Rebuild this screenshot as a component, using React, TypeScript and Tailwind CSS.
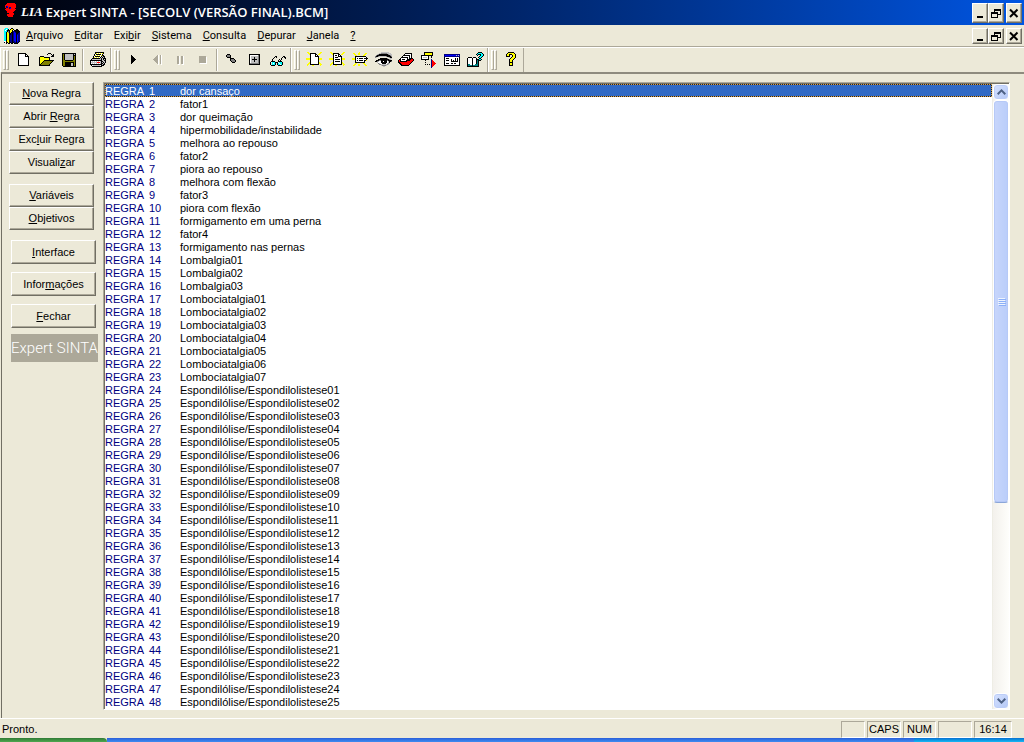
import React from "react";

const palette: Record<string, string> = {
  K: "#000000",
  W: "#ffffff",
  Y: "#ffff00",
  O: "#808000",
  G: "#808080",
  S: "#c0c0c0",
  R: "#ff0000",
  C: "#00ffff",
  B: "#0000ff",
  N: "#000080",
  T: "#008080",
  L: "#aca899",
};

const art: Record<string, string[]> = {
  novo: [
    "",
    "...KKKKKKKK",
    "...KWWWWWWKK",
    "...KWWWWWWKWK",
    "...KWWWWWWKKKK",
    "...KWWWWWWWWWK",
    "...KWWWWWWWWWK",
    "...KWWWWWWWWWK",
    "...KWWWWWWWWWK",
    "...KWWWWWWWWWK",
    "...KWWWWWWWWWK",
    "...KWWWWWWWWWK",
    "...KWWWWWWWWWK",
    "...KKKKKKKKKKK",
  ],
  abrir: [
    "",
    "..........KKK...",
    ".........K...K.K",
    "..............KK",
    "..KKKK.......KKK",
    ".KYYYYKKKKKK....",
    ".KYYYYYYYYYK....",
    ".KYYYYYYYYYK....",
    ".KYYYYKKKKKKKKKK",
    ".KYYYKOOOOOOOOK.",
    ".KYYKOOOOOOOOK..",
    ".KYKOOOOOOOOK...",
    ".KKOOOOOOOOK....",
    ".KKKKKKKKKKK....",
  ],
  salvar: [
    "",
    ".KKKKKKKKKKKKKK",
    ".KOKSSSSSSSSKSK",
    ".KOKSSSSSSSSKKK",
    ".KOKSSSSSSSSKOK",
    ".KOKSSSSSSSSKOK",
    ".KOKSSSSSSSSKOK",
    ".KOKSSSSSSSSKOK",
    ".KOOKKKKKKKKOOK",
    ".KOOOOOOOOOOOOK",
    ".KOOKKKKKKKKKOK",
    ".KOOKKKKKKSSKOK",
    ".KOOKKKKKKSSKOK",
    ".KOOKKKKKKSSKOK",
    "..KKKKKKKKKKKKK",
  ],
  imprimir: [
    ".....KKKKKKKKK",
    ".....KYWYWYWYK",
    "....KWKKKKKWK",
    "....KYWYWYWYKK",
    "...KWKKKKKWKSKK",
    "...KYWYWYWKSKSK",
    "..KKKKKKKKSKSKKK",
    ".KSSSSSSSSSKSKSK",
    "KKKKKKKKKKKKSSKK",
    "KWSWSWSWSWSKKSSK",
    "KSSSSSSRRRSKSKSK",
    "KWSWSWSWSWSKKSK",
    "KKKKKKKKKKKKSKK",
    ".KWSSSSSSSWKKK",
    "..KKKKKKKKKK",
  ],
  executar: [
    "", "", "",
    ".....K",
    ".....KK",
    ".....KKK",
    ".....KKKK",
    ".....KKKKK",
    ".....KKKK",
    ".....KKK",
    ".....KK",
    ".....K",
  ],
  voltar: [
    "", "", "",
    "........LW.LW",
    ".......LLW.LW",
    "......LLLW.LW",
    ".....LLLLW.LW",
    "....LLLLLW.LW",
    ".....LLLLW.LW",
    "......LLLW.LW",
    ".......LLW.LW",
    "........LW.LW",
    ".........W..W",
  ],
  pausar: [
    "", "", "", "",
    ".....LLW.LLW",
    ".....LLW.LLW",
    ".....LLW.LLW",
    ".....LLW.LLW",
    ".....LLW.LLW",
    ".....LLW.LLW",
    ".....LLW.LLW",
    ".....LLW.LLW",
    "......WW..WW",
  ],
  parar: [
    "", "", "", "",
    "....LLLLLLL",
    "....LLLLLLLW",
    "....LLLLLLLW",
    "....LLLLLLLW",
    "....LLLLLLLW",
    "....LLLLLLLW",
    "....LLLLLLLW",
    ".....WWWWWWW",
  ],
  passos: [
    "", "",
    "...KKK",
    "..KGGGK",
    "..KGGGK",
    "...KKKK",
    "......KKKK",
    "......KGGGK",
    "......KGGGGK",
    ".......KGGGK",
    "........KKK",
  ],
  ponto: [
    "", "",
    "..KKKKKKKKKKK",
    "..KWWWWWWWWGK",
    "..KWSSSSSSSGK",
    "..KWSSSKSSSGK",
    "..KWSSSKSSSGK",
    "..KWSKKKKKSGK",
    "..KWSSSKSSSGK",
    "..KWSSSKSSSGK",
    "..KWSSSSSSSGK",
    "..KGGGGGGGGGK",
    "..KKKKKKKKKKK",
  ],
  oculos: [
    "", "", "", "",
    ".....KK......KK",
    "....K.K.....K.KK",
    "...K.......K...K",
    "..K......K.K",
    "..K.....K.K",
    ".KKKK...KKKK",
    "KWCCCKKKWCCCK",
    "K.CWCK.KCWCCK",
    "K.CCCK.KCCWCK",
    ".KKKK...KKKK",
  ],
  regra: [
    ".YY...........YY",
    "..YYKKKKKK...YY",
    "...YKWWWWKK.YY",
    "....KWWWWKWK",
    "....KWWWWKKKK",
    "....KWWWWWWWK",
    "YYYYKWWWWWWWKYYY",
    "YYYYKWWWWWWWKYYY",
    "....KWWWWWWWK",
    "....KWWWWWWWK",
    "...YKWWWWWWWKY",
    "..YYKWWWWWWWKYY",
    ".YY.KKKKKKKKK.YY",
    ".Y....YY......Y",
  ],
  texto: [
    ".YY...........YY",
    "..YYKKKKKK...YY",
    "...YKWWWWKK.YY",
    "....KWKKWKWK",
    "....KWWWWKKKK",
    "....KWKKKWWWK",
    "YYYYKWWWWWWWKYYY",
    "YYYYKWKKKKKWKYYY",
    "....KWWWWWWWK",
    "....KWKKKKKWK",
    "...YKWWWWWWWKY",
    "..YYKWWWWWWWKYY",
    ".YY.KKKKKKKKK.YY",
    ".Y....YY......Y",
  ],
  rotulo: [
    ".......Y",
    ".YY...YY.....YY",
    "..YY..YY....YY",
    "...YY......YY",
    "...KKKKKKKKKKK",
    "...KWWWWWWWWWWK",
    "YYYKWKWKKKKWKKKK",
    "YYYKWWWWWWWWWWK",
    "...KWKWKKKKWKKY",
    "...KWWWWWWWWK",
    "...KKKKKKKKKK",
    "...YY......YY",
    "..YY..YY....YY",
    ".YY...YY.....YY",
  ],
  olho: [
    "......SSSSSSSS",
    "....SSGGGGGGSSSS",
    "..SGKKKKKKKKKGSSS",
    ".GKKKKKKKKKKKKKGS",
    "GKKGSSSSSSSGKKKKG",
    "GS...........SGKK",
    ".....KKKKKKKG..SS",
    "...KKKKKKKKKKKGS",
    ".KKKGGKKKKKKGKKKK",
    "KKGSWWKKWKKKWSKKG",
    "..SWWWKKKKKKWSK",
    "...GSWWKKKKWSGS",
    "....GGSSSSSSGS",
    "......SGGGGS",
    "........SS",
  ],
  fichas: [
    "",
    ".......KKKKKKK",
    "......KWWWWWWK",
    ".....KKKKKKKWK",
    "....KWWWWWWKWK",
    "...KKKKKKKWKWK",
    "..KWWWWWWKWKKKK",
    ".KKWKKKWWKKKKRRK",
    "KRKWWWWWKKKKRRRK",
    "KRKKKKKKKRRRRRK",
    "KKRRRRRRRRRRRK",
    ".KKRRRRRRRRRK",
    "..KKRRRRRRRK",
    "...KKKKKKKK",
  ],
  depurar: [
    "...KKKKKKKKK",
    "...KYYYYYYYK",
    "...KYYYYYYYK",
    "KKKKKKKKKKKK",
    "KWWWWWWK..K",
    "KWSSSSWK..K",
    "KWWWWWWK",
    "KKKKKKKK..N",
    "....K.....NR",
    "..........NRR",
    "....K.....NRRR",
    "..........NRRRR",
    "....K.K.K.NRRR",
    "..........NRR",
    "..........NR",
    "..........N",
  ],
  janela: [
    "", "",
    "NNNNNNNNNNNNNNNN",
    "NBBBBBBBBBBBSBSN",
    "NNNNNNNNNNNNNNNN",
    "KWWWWWWWWWWWWWWK",
    "KWKKKWWWWWWKWKWK",
    "KWWWWWWKWWWKWKWK",
    "KWKKKWWKWKWKWKWK",
    "KWWWWWWKKKKKKKWK",
    "KWWWWWWWWWWWWWWK",
    "KWKKKWWKKWKKWWWK",
    "KWWWWWWWWWWWWWWK",
    "KKKKKKKKKKKKKKKK",
  ],
  livro: [
    "...........KKKK",
    "..........KCCCCK",
    ".........KCKKKCCK",
    "..........K..KCCK",
    "............KCCK",
    ".KKKK.KKK..KCCK",
    "KWWWWKWWWK..KK",
    "KWWWWKWWWKKKCCK",
    "KWWWWKWWWKTKKK",
    "KWWWWKWWWKTK",
    "KWWWWKWWWKTK",
    "KWWWWKWWWKTK",
    "KTTWWKWWTTTK",
    "KTTTTKTTTTTK",
    "KKKKKKKKKKKK",
  ],
  ajuda: [
    ".....KKKKKK",
    "....KYYYYYYK",
    "...KYYKKKYYYK",
    "...KYYK..KYYK",
    "...KKKK..KYYK",
    "........KYYYK",
    ".......KYYYK",
    "......KYYYK",
    "......KYYK",
    "......KYYK",
    "......KKKK",
    "......KYYK",
    "......KYYK",
    "......KKKK",
  ],
  marca: [
    "...RRRRRRRR",
    "..RRRRRRRRRR",
    ".RRRRRRRRRRR",
    ".RNBRRRRRRRR",
    ".RNNRNNRRRRR",
    "..RRRNBRRRR",
    ".RRRRRRRRRRR",
    "..RRRRRRRRR",
    "...RRRRRRR",
    "...RRRRRR",
    ".....RRRRR",
    "...RRRRRRR",
    "...RRRRRR",
    "....RRRRR",
  ],
  livros: [
    ".CCC...KK",
    "CCWCK.KYYK..KK",
    "CWCKKKYYK.KKKKK",
    "CCCKGKYYKNNKKKKK",
    "CCKYGKYKKNBNKKKN",
    "CCKYYKKNKNBBKKNN",
    "CCKYYKKNKNBBKNNN",
    "CCKYYKNNKNBBKBNN",
    "CCKYYKNNKNBBKBNN",
    "CCKYYKNNKNBBKBNN",
    "CCKYYKNNKNBBKBNN",
    "CCKYYKNNKNBBKBNN",
    "CCKYYKNNKNBBKBNN",
    "WWKYYKNNKNNBKBNK",
    "KWKKYKKNKKNNKNK",
    "..K.KK.KK.KKKK",
  ],
};

function PixelIcon({ name }: { name: string }) {
  const cells: React.ReactNode[] = [];
  art[name].forEach((row, y) => {
    let x = 0;
    while (x < row.length) {
      const c = row[x];
      let end = x + 1;
      while (end < row.length && row[end] === c) end++;
      if (c !== ".") {
        cells.push(<rect key={x + "-" + y} x={x} y={y} width={end - x} height={1} fill={palette[c]} />);
      }
      x = end;
    }
  });
  return (
    <svg viewBox="0 0 16 16" className="size-4 shrink-0 overflow-visible" shapeRendering="crispEdges" aria-hidden="true">
      {cells}
    </svg>
  );
}

function Mnemonic({ text }: { text: string }) {
  const i = text.indexOf("&");
  if (i < 0) return <>{text}</>;
  return (
    <>
      {text.slice(0, i)}
      <span className="underline underline-offset-1">{text[i + 1]}</span>
      {text.slice(i + 2)}
    </>
  );
}

const raised =
  "border border-t-white border-l-white border-r-[#716f64] border-b-[#716f64] bg-[#ece9d8] shadow-[inset_-1px_-1px_0_#aca899]";

function WindowButtons({ tall }: { tall?: boolean }) {
  const size = tall ? "h-5 w-4" : "h-4 w-4";
  const button = raised + " flex items-center justify-center " + size;
  return (
    <div className="flex">
      <button aria-label="Minimizar" className={button}>
        <svg viewBox="0 0 12 12" className="size-3" shapeRendering="crispEdges">
          <rect x="3" y="9" width="6" height="2" />
        </svg>
      </button>
      <button aria-label="Restaurar" className={button}>
        <svg viewBox="0 0 12 12" className="size-3" shapeRendering="crispEdges" fill="none" stroke="#000">
          <path d="M4.5 5V2.5H10.5V7.5H8M4 2h7" />
          <path d="M1.5 5.5H7.5V10.5H1.5ZM1 6.5h7M4 3.5h7" />
        </svg>
      </button>
      <button aria-label="Fechar janela" className={button + " ml-0.5"}>
        <svg viewBox="0 0 12 12" className="size-3" stroke="#000" strokeWidth="2">
          <path d="M2 2.5L9.500 10M9.500 2.500L2 10" />
        </svg>
      </button>
    </div>
  );
}

type Tool = { icon: string; label: string; off?: boolean } | null;

const bands: Tool[][] = [
  [
    { icon: "novo", label: "Novo" },
    { icon: "abrir", label: "Abrir" },
    { icon: "salvar", label: "Salvar" },
    null,
    { icon: "imprimir", label: "Imprimir" },
  ],
  [
    { icon: "executar", label: "Executar" },
    { icon: "voltar", label: "Voltar", off: true },
    { icon: "pausar", label: "Pausar", off: true },
    { icon: "parar", label: "Parar", off: true },
    null,
    { icon: "passos", label: "Passo a passo" },
    { icon: "ponto", label: "Ponto de parada" },
    { icon: "oculos", label: "Observar" },
  ],
  [
    { icon: "regra", label: "Nova regra" },
    { icon: "texto", label: "Nova variável" },
    { icon: "rotulo", label: "Novo objetivo" },
    { icon: "olho", label: "Visualizar regra" },
    { icon: "fichas", label: "Fichas" },
    { icon: "depurar", label: "Depurar" },
    { icon: "janela", label: "Interface" },
    { icon: "livro", label: "Informações" },
  ],
  [{ icon: "ajuda", label: "Ajuda" }],
];

const gripBar = "h-5 w-[3px] border border-t-white border-l-white border-r-[#aca899] border-b-[#aca899]";

function Band({ tools }: { tools: Tool[] }) {
  return (
    <div className="flex h-full items-center border-r border-l border-l-white border-r-[#aca899] pr-px pl-0.5">
      <div className="mr-0.5 flex">
        <span className={gripBar} />
        <span className={gripBar} />
      </div>
      {tools.map((t, i) =>
        t ? (
          <button key={i} aria-label={t.label} disabled={t.off} className="flex h-[22px] w-[23px] items-center justify-center">
            <PixelIcon name={t.icon} />
          </button>
        ) : (
          <span key={i} className="mx-0.5 h-[22px] w-0.5 border-r border-l border-l-[#aca899] border-r-white" />
        ),
      )}
    </div>
  );
}

const menus = ["&Arquivo", "&Editar", "Exi&bir", "&Sistema", "&Consulta", "&Depurar", "&Janela", "&?"];

const names = [
  "dor cansaço",
  "fator1",
  "dor queimação",
  "hipermobilidade/instabilidade",
  "melhora ao repouso",
  "fator2",
  "piora ao repouso",
  "melhora com flexão",
  "fator3",
  "piora com flexão",
  "formigamento em uma perna",
  "fator4",
  "formigamento nas pernas",
  ...Array.from({ length: 3 }, (_, i) => "Lombalgia0" + (i + 1)),
  ...Array.from({ length: 7 }, (_, i) => "Lombociatalgia0" + (i + 1)),
  ...Array.from({ length: 25 }, (_, i) => "Espondilólise/Espondilolistese" + String(i + 1).padStart(2, "0")),
];

function SideButton({ text, single }: { text: string; single?: boolean }) {
  return (
    <button className={raised + " w-[85px] text-center " + (single ? "h-6" : "h-[23px]")}>
      <Mnemonic text={text} />
    </button>
  );
}

function ScrollBar() {
  const arrow =
    "flex h-4 w-full shrink-0 items-center justify-center rounded-sm border border-white bg-linear-to-br from-[#d6e2ff] to-[#b4c8f6] shadow-[inset_0_0_0_1px_#bccdf8]";
  return (
    <div className="flex w-[17px] shrink-0 flex-col border-l border-[#eeede5] bg-linear-to-r from-[#f3f1ec] to-[#fefefb]">
      <button aria-label="Rolar para cima" className={arrow}>
        <svg viewBox="0 0 9 6" className="h-1.5 w-[9px]" fill="none" stroke="#4d6185" strokeWidth="2">
          <path d="M.7 5.200L4.500 1.400L8.300 5.200" />
        </svg>
      </button>
      <div className="min-h-0 flex-1">
        <div className="flex h-[68%] items-center justify-center rounded-sm border border-white border-b-[#8ba6d8] bg-linear-to-r from-[#c8d6fb] to-[#b9cdfa] shadow-[inset_0_0_0_1px_#b6c9f7]">
          <div className="flex flex-col gap-px">
            {[0, 1, 2, 3].map((n) => (
              <span key={n} className="h-px w-[7px] bg-[#eef4fe] shadow-[1px_1px_0_#8cb0f8]" />
            ))}
          </div>
        </div>
      </div>
      <button aria-label="Rolar para baixo" className={arrow}>
        <svg viewBox="0 0 9 6" className="h-1.5 w-[9px]" fill="none" stroke="#4d6185" strokeWidth="2">
          <path d="M.7 .8L4.500 4.600L8.300 .8" />
        </svg>
      </button>
    </div>
  );
}

const panel = "flex h-[17px] items-center justify-center border border-t-[#aca899] border-l-[#aca899] border-r-white border-b-white";

export default function App() {
  return (
    <div className="flex h-screen flex-col overflow-hidden bg-[#ece9d8] font-['Liberation_Sans',Arial,sans-serif] text-[11px] leading-[13px] text-black">
      <header className="flex h-[25px] shrink-0 items-center justify-between bg-linear-to-r from-[#00030c] via-[#00256a] to-[#0055e2] pr-0.5 pl-1">
        <h1 className="flex items-center pb-px font-['Open_Sans',sans-serif] text-[13px] leading-4 font-semibold text-white">
          <span className="mb-0.5">
            <PixelIcon name="marca" />
          </span>
          <em className="mr-[3px] ml-px font-['Liberation_Serif',serif] text-[13px] font-bold">LIA</em>
          Expert SINTA - [SECOLV (VERSÃO FINAL).BCM]
        </h1>
        <WindowButtons tall />
      </header>

      <nav className="flex h-[22px] shrink-0 items-center border-b border-[#aca899] pr-0.5 pl-1">
        <PixelIcon name="livros" />
        <div className="ml-1.5 flex flex-1 gap-[11px] font-[Roboto,sans-serif]">
          {menus.map((m) => (
            <button key={m}>
              <Mnemonic text={m} />
            </button>
          ))}
        </div>
        <WindowButtons />
      </nav>

      <div role="toolbar" aria-label="Ferramentas" className="flex h-[25px] shrink-0 border-t border-white">
        {bands.map((tools, i) => (
          <Band key={i} tools={tools} />
        ))}
      </div>

      <main className="ml-px flex min-h-0 flex-1 border-t-2 border-l border-t-[#8e8b7e] border-l-[#716f64] pt-2 pr-3.5 pb-2 pl-[7px]">
        <aside className="flex w-[94px] shrink-0 flex-col gap-2.5">
          <div className="flex flex-col">
            <SideButton text="&Nova Regra" />
            <SideButton text="Abrir &Regra" />
            <SideButton text="Exc&luir Regra" />
            <SideButton text="Visuali&zar" />
          </div>
          <div className="flex flex-col">
            <SideButton text="&Variáveis" />
            <SideButton text="&Objetivos" />
          </div>
          <div className="flex flex-col gap-2 pl-0.5">
            <SideButton text="&Interface" single />
            <SideButton text="Infor&mações" single />
            <SideButton text="&Fechar" single />
          </div>
          <p className="-mt-1 ml-0.5 w-[87px] overflow-hidden bg-[#aca899] font-[Roboto,sans-serif] text-[15px] leading-7 font-light whitespace-nowrap text-white">
            Expert SINTA
          </p>
        </aside>

        <section className="flex min-w-0 flex-1 border border-t-[#aca899] border-l-[#aca899] border-r-white border-b-white bg-white pt-px pl-px shadow-[inset_1px_1px_0_#716f64]">
          <ul role="listbox" aria-label="Regras" className="min-w-0 flex-1 overflow-hidden leading-[15px]">
            {names.map((name, i) => (
              <li
                key={name}
                role="option"
                aria-selected={i === 0}
                className={
                  "flex h-[13px] whitespace-nowrap " +
                  (i === 0
                    ? "bg-[#316ac5] text-white shadow-[inset_0_0_0_1px_#1c2530] outline-1 -outline-offset-1 outline-dotted outline-[#e0a040]"
                    : "")
                }
              >
                <span className={"w-11 " + (i === 0 ? "" : "text-[#000080]")}>REGRA</span>
                <span className={"w-[31px] " + (i === 0 ? "" : "text-[#000080]")}>{i + 1}</span>
                <span>{name}</span>
              </li>
            ))}
          </ul>
          <ScrollBar />
        </section>
      </main>

      <footer className="flex h-5 shrink-0 items-end justify-between border-t border-white pr-3 pl-0.5">
        <span className="pb-0.5">Pronto.</span>
        <div className="flex gap-0.5">
          <span className={panel + " w-6"} />
          <span className={panel + " w-[34px]"}>CAPS</span>
          <span className={panel + " w-[33px]"}>NUM</span>
          <span className={panel + " w-[34px]"} />
          <span className={panel + " w-[38px]"}>16:14</span>
        </div>
      </footer>
      <div className="flex h-1 shrink-0">
        <div className="w-[107px] rounded-tr-sm bg-linear-to-b from-[#2f7a35] to-[#4fa850]" />
        <div className="flex-1 bg-linear-to-b from-[#2b5fd9] to-[#3f8cf0]" />
        <div className="w-[110px] bg-linear-to-b from-[#0c6fd0] to-[#19b9f3]" />
      </div>
    </div>
  );
}
